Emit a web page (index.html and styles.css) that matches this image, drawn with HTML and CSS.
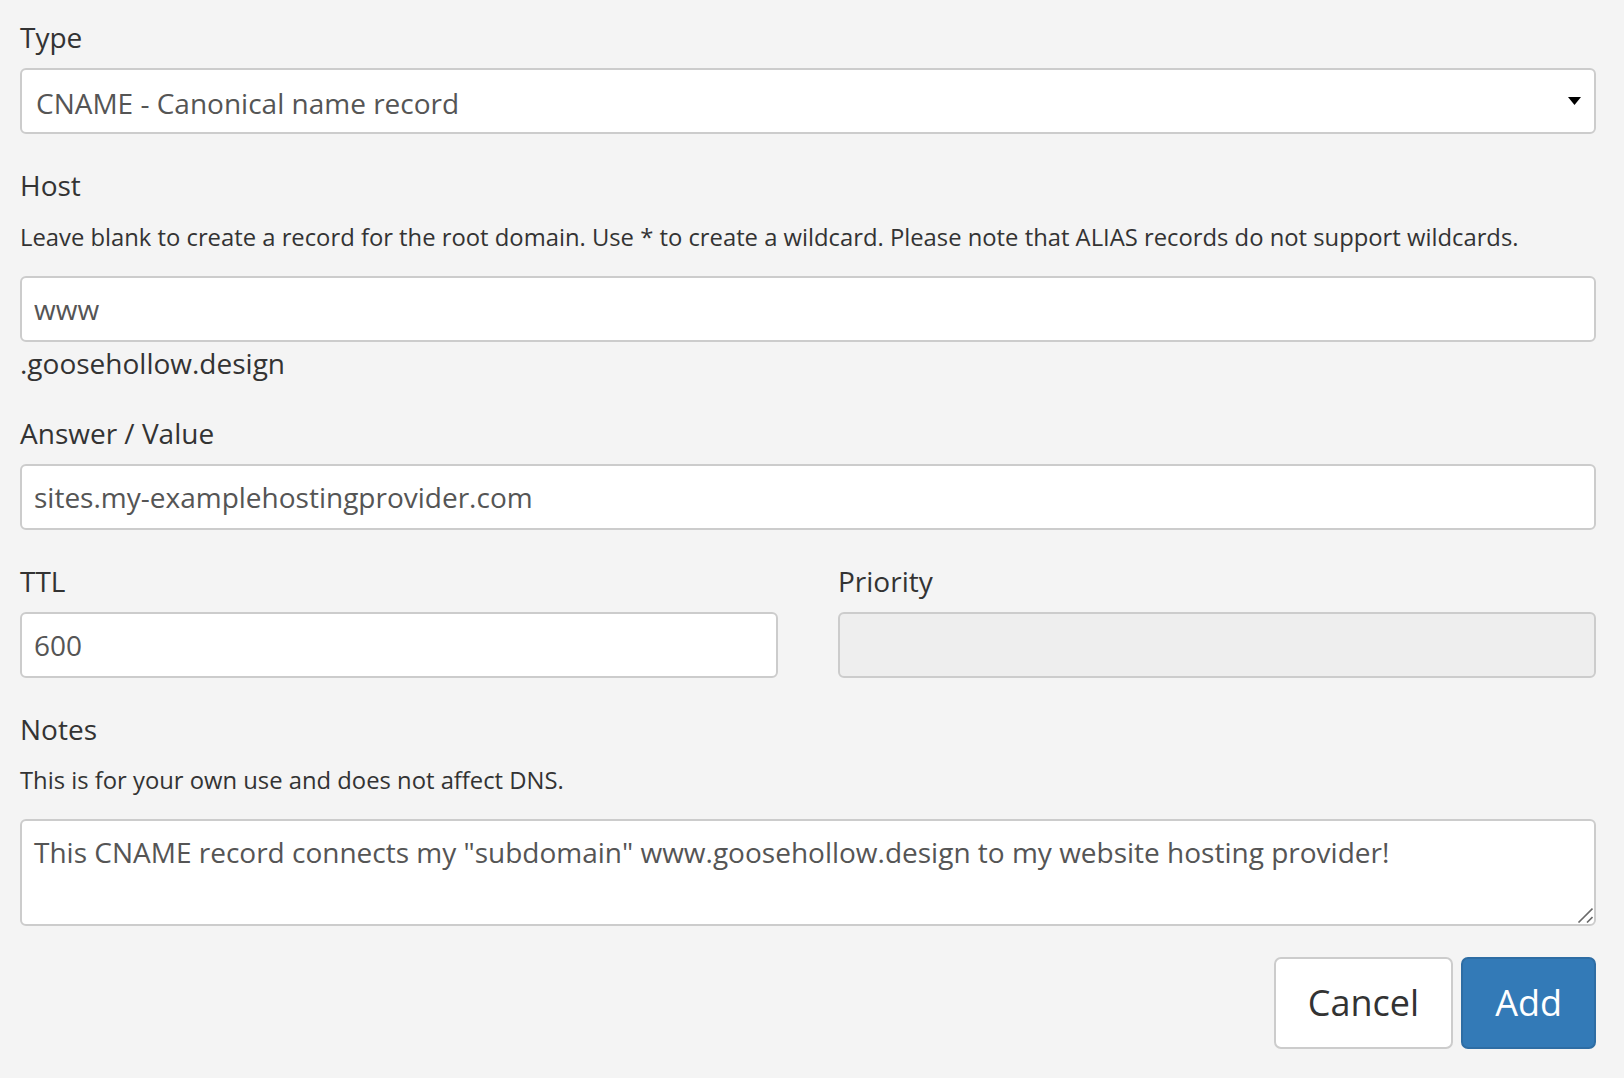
FILE: index.html
```html
<!DOCTYPE html>
<html lang="en">
<head>
<meta charset="utf-8">
<title>Add DNS record</title>
<link rel="stylesheet" href="styles.css">
</head>
<body>
<form class="record-form">
  <div class="group">
    <label class="label" for="type">Type</label>
    <div class="select-wrap">
      <select id="type" class="control select">
        <option>CNAME - Canonical name record</option>
      </select>
      <svg class="caret" width="13" height="8" viewBox="0 0 13 8" aria-hidden="true"><path d="M0 0H13L6.5 8Z" fill="#000"/></svg>
    </div>
  </div>

  <div class="group">
    <label class="label" for="host">Host</label>
    <p class="help">Leave blank to create a record for the root domain. Use * to create a wildcard. Please note that ALIAS records do not support wildcards.</p>
    <input id="host" class="control" type="text" value="www">
    <div class="suffix">.goosehollow.design</div>
  </div>

  <div class="group">
    <label class="label" for="answer">Answer / Value</label>
    <input id="answer" class="control" type="text" value="sites.my-examplehostingprovider.com">
  </div>

  <div class="group columns">
    <div class="col">
      <label class="label" for="ttl">TTL</label>
      <input id="ttl" class="control" type="text" value="600">
    </div>
    <div class="col">
      <label class="label" for="priority">Priority</label>
      <input id="priority" class="control" type="text" disabled>
    </div>
  </div>

  <div class="group">
    <label class="label" for="notes">Notes</label>
    <p class="help help-notes">This is for your own use and does not affect DNS.</p>
    <div class="textarea-wrap">
      <textarea id="notes" class="control textarea" rows="2">This CNAME record connects my "subdomain" www.goosehollow.design to my website hosting provider!</textarea>
      <svg class="grip" width="16" height="16" viewBox="0 0 16 16" aria-hidden="true">
        <path d="M1.5 15.5L15.5 1.5M10 15.5L15.5 10" stroke="#6a6a6a" stroke-width="1.6" fill="none"/>
      </svg>
    </div>
  </div>

  <div class="actions">
    <button type="button" class="btn btn-default">Cancel</button>
    <button type="button" class="btn btn-primary">Add</button>
  </div>
</form>
</body>
</html>
```

FILE: styles.css
```css
* {
  box-sizing: border-box;
}

html, body {
  margin: 0;
  background: #f4f4f4;
}

body {
  font-family: "Open Sans", "Noto Sans", "Liberation Sans", sans-serif;
  color: #333;
  padding: 17px 28px 0 20px;
}

.record-form {
  display: flex;
  flex-direction: column;
}

.group {
  display: flex;
  flex-direction: column;
  margin-bottom: 31px;
}

.label {
  display: block;
  font-size: 28px;
  line-height: 40px;
  font-weight: 400;
  color: #333;
  margin-bottom: 11px;
}

.help {
  margin: 4px 0 22px;
  font-size: 23.8px;
  line-height: 34px;
  color: #333;
}

.help-notes {
  margin-top: 3px;
}

.control {
  display: block;
  width: 100%;
  height: 66px;
  margin: 0;
  padding: 0 12px;
  font-family: inherit;
  font-size: 28px;
  line-height: 40px;
  color: #555;
  background: #fff;
  border: 2px solid #ccc;
  border-radius: 6px;
  outline: none;
}

.control:disabled {
  background: #eee;
}

.select-wrap {
  position: relative;
}

.select {
  appearance: none;
  -webkit-appearance: none;
  padding: 4px 40px 0 14px;
}

.caret {
  position: absolute;
  right: 15px;
  top: 29px;
  pointer-events: none;
}

.suffix {
  margin-top: 2px;
  font-size: 28px;
  line-height: 38px;
  color: #333;
}

.columns {
  display: grid;
  grid-template-columns: 1fr 1fr;
  column-gap: 60px;
}

.col {
  display: flex;
  flex-direction: column;
}

.textarea-wrap {
  position: relative;
}

.textarea {
  height: 107px;
  padding: 11px 12px;
  resize: none;
}

.grip {
  position: absolute;
  right: 3px;
  bottom: 3px;
  pointer-events: none;
}

.actions {
  display: flex;
  justify-content: flex-end;
  gap: 8px;
  margin-top: 0;
}

.btn {
  font-family: inherit;
  font-size: 36px;
  line-height: 50px;
  padding: 19px 32px;
  border-radius: 7px;
  border: 2px solid #ccc;
  cursor: pointer;
}

.btn-default {
  background: #fff;
  color: #333;
  border-color: #ccc;
}

.btn-primary {
  background: #337ab7;
  color: #fff;
  border-color: #2e6da4;
}
```
